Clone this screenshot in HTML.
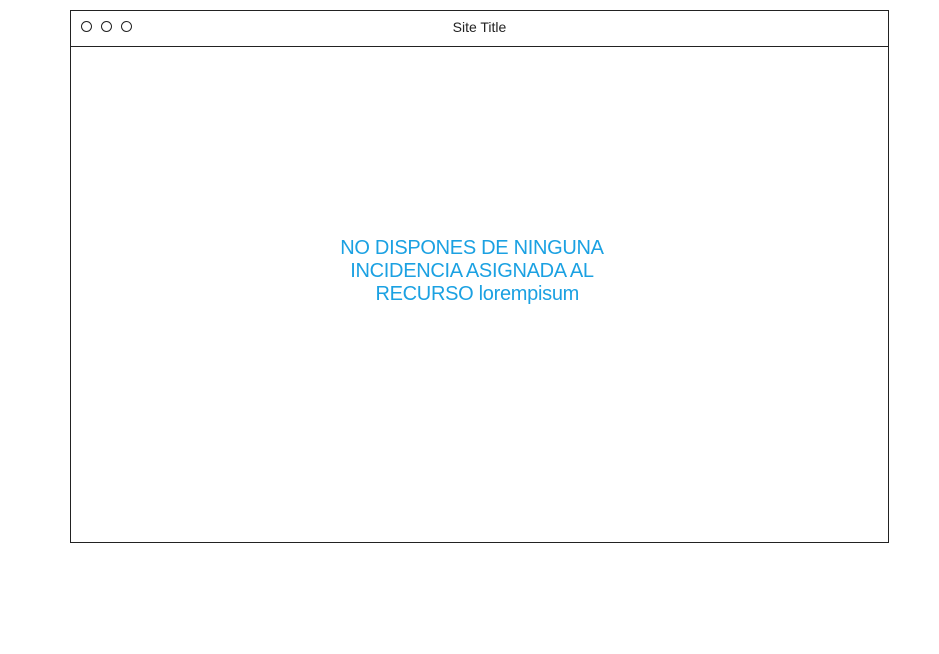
<!DOCTYPE html>
<html><head><style>
body{margin:0;width:939px;height:654px;background:#fff;position:relative;overflow:hidden;font-family:"Liberation Sans",sans-serif}
.frame{position:absolute;left:70px;top:10px;width:817px;height:531px;border:1.5px solid #222}
.bar{position:absolute;left:70px;top:46px;width:819px;height:0;border-top:1.5px solid #222}
.c{position:absolute;top:21px;width:9px;height:9px;border:1.5px solid #222;border-radius:50%}
.title{position:absolute;left:0;width:959px;top:19px;text-align:center;font-size:14px;color:#222}
.msg{position:absolute;left:272px;width:400px;top:237px;text-align:center;font-size:20px;line-height:23px;color:#1ba1e2;letter-spacing:-0.3px}
</style></head><body>
<div class="frame"></div>
<div class="bar"></div>
<div class="c" style="left:81px"></div>
<div class="c" style="left:101px"></div>
<div class="c" style="left:121px"></div>
<div class="title">Site Title</div>
<div class="msg">NO DISPONES DE NINGUNA<br>INCIDENCIA ASIGNADA AL<br>&nbsp;&nbsp;RECURSO lorempisum</div>
</body></html>
